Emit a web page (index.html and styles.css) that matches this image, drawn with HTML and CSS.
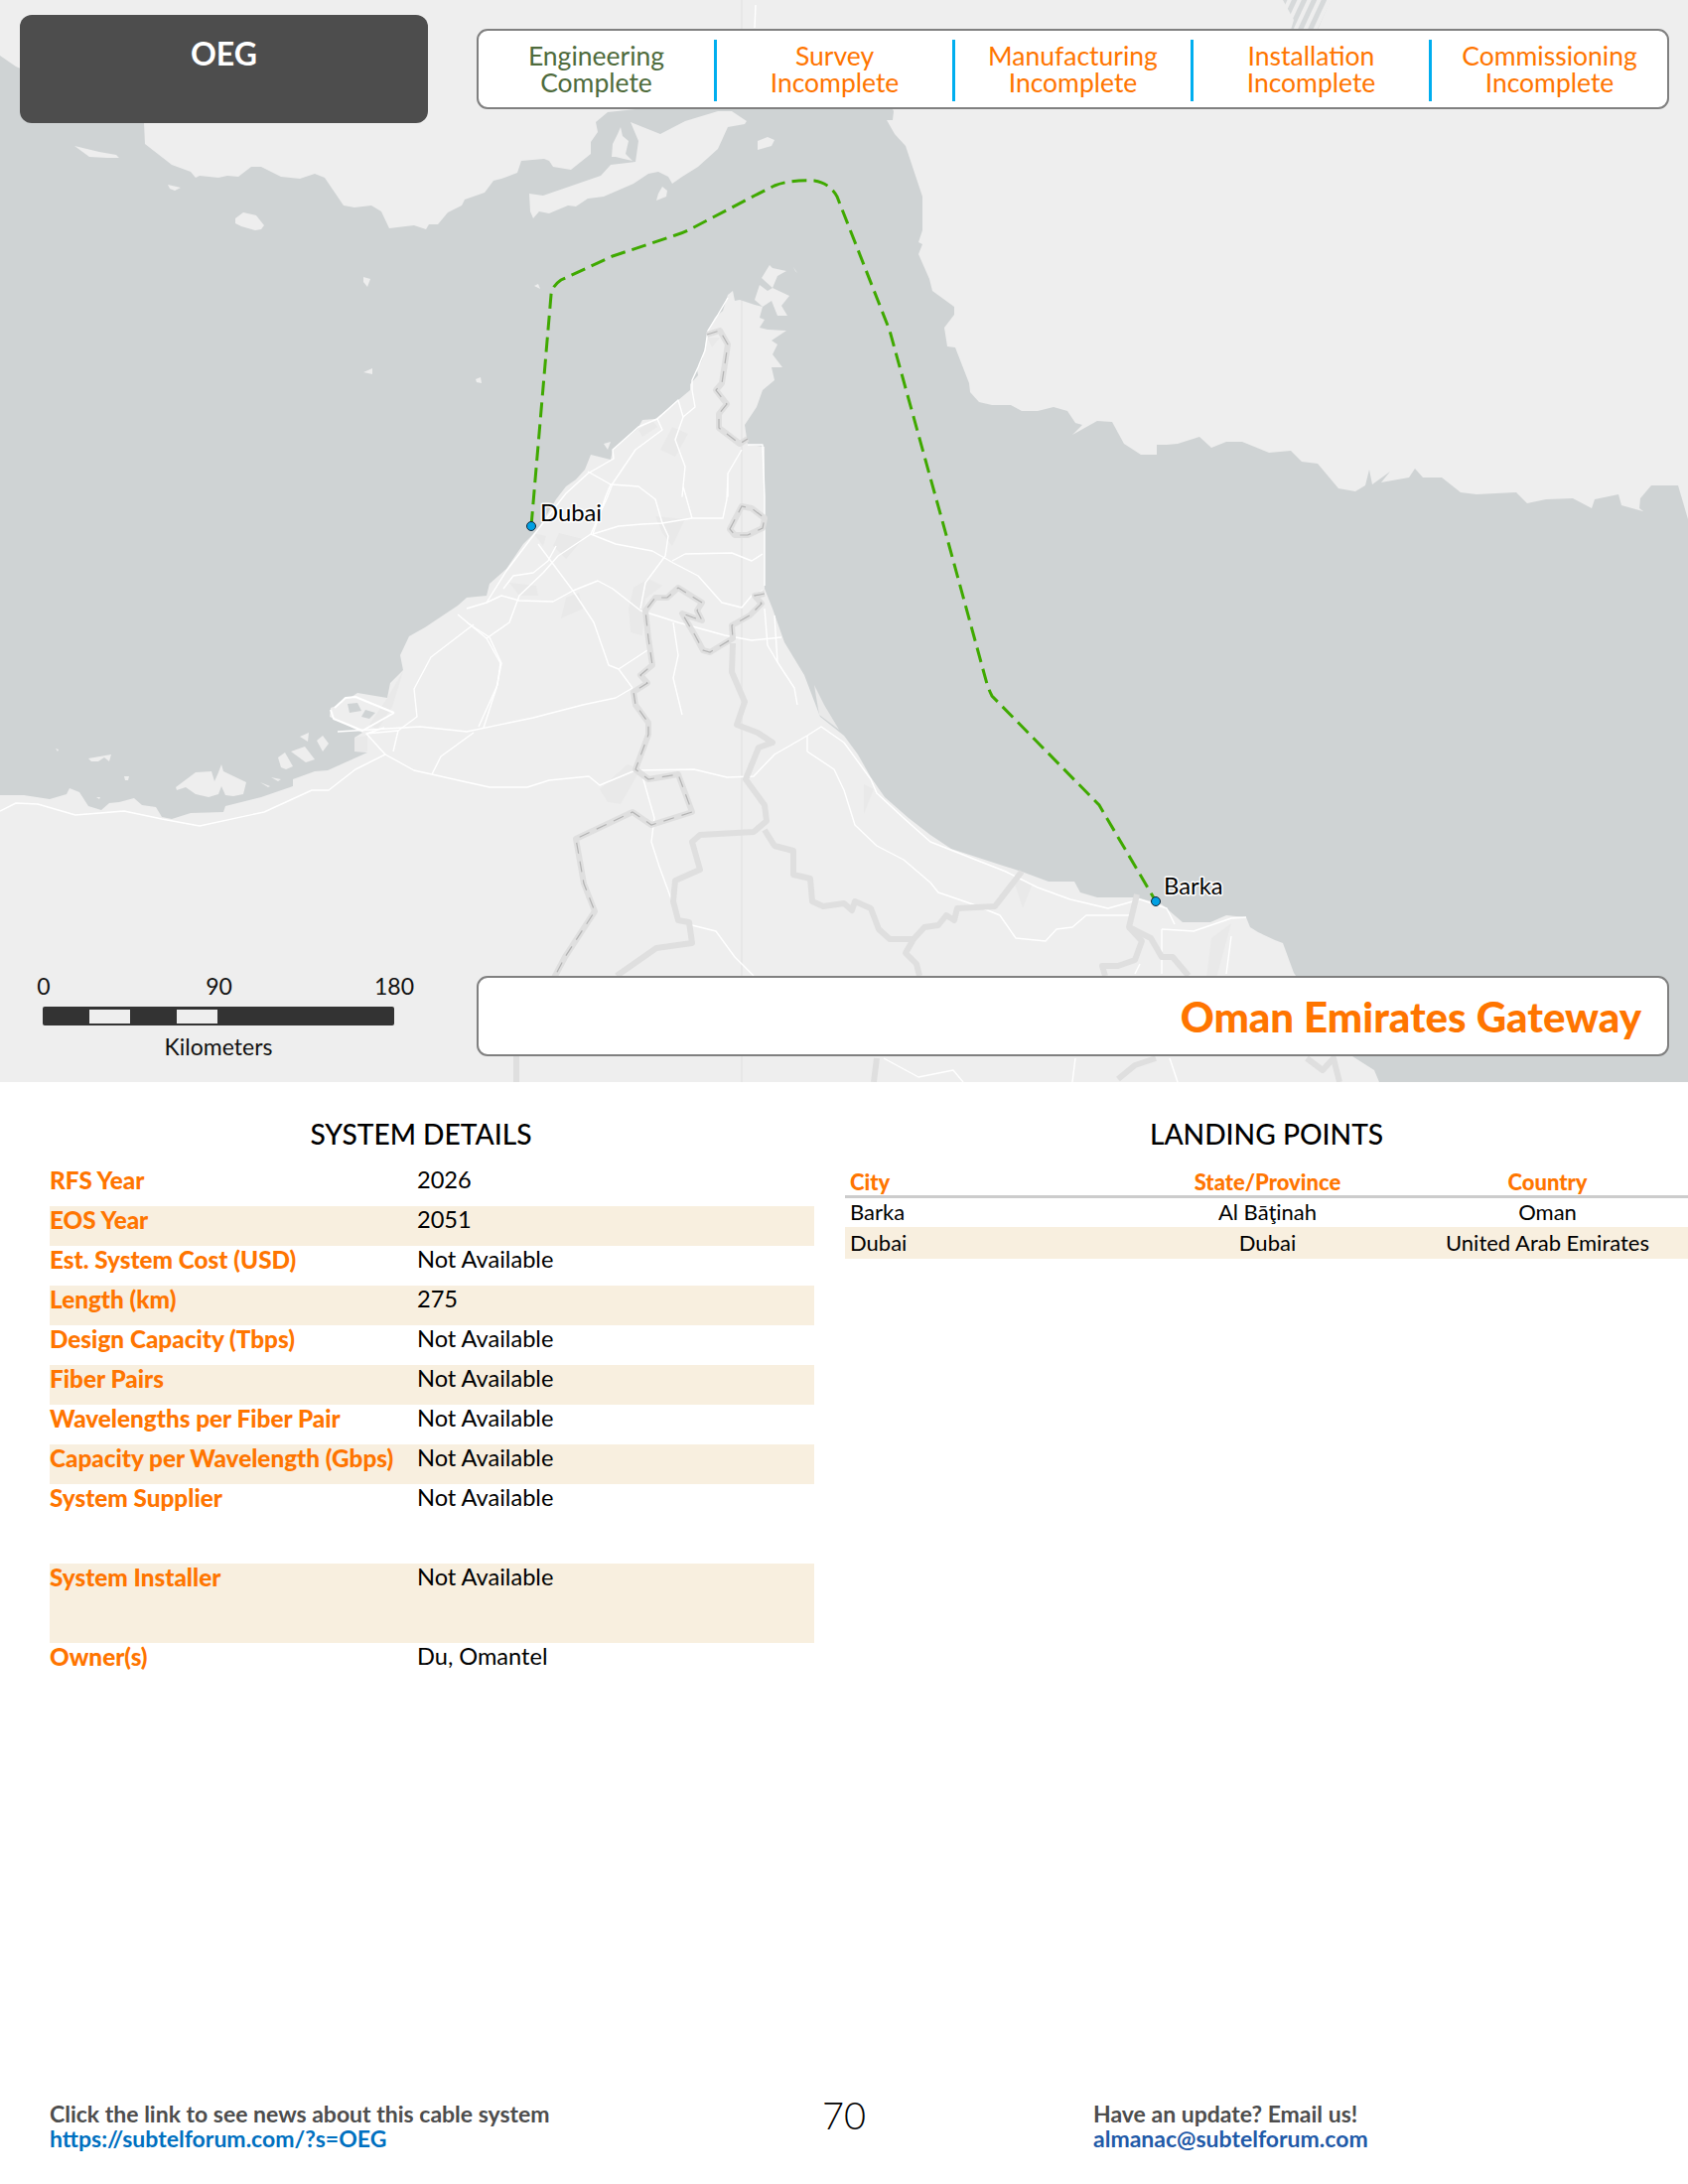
FILE: index.html
```html
<!DOCTYPE html>
<html lang="en">
<head>
<meta charset="utf-8">
<title>OEG - Oman Emirates Gateway</title>
<link rel="stylesheet" href="styles.css">
</head>
<body>
<div class="page">
  <section class="map">
    <svg class="map-art" viewBox="0 0 1700 1090" width="1700" height="1090" aria-hidden="true">
      <defs>
        <pattern id="hatch" width="9" height="9" patternUnits="userSpaceOnUse" patternTransform="rotate(25)">
          <rect width="9" height="9" fill="#eeeeee"/>
          <rect width="5" height="9" fill="#d6d9da"/>
        </pattern>
      </defs>
      <rect class="land" width="1700" height="1090"/>
      <path class="meridian" d="M747 0V1090"/>
      <polygon fill="url(#hatch)" points="1292,0 1340,0 1327,30 1300,30 1303,20"/>
      <polygon class="water" points="0,56 16,67 145,124 146,145 173,166 192,173 197,179 201,177 220,179 229,177 240,178 253,168 263,168 283,178 302,180 317,175 327,179 346,207 357,209 374,207 384,213 392,230 417,227 429,231 432,226 441,226 451,214 465,207 468,201 488,194 497,182 505,180 521,174 525,162 548,160 553,162 557,168 575,171 595,155 595,143 602,133 600,123 612,113 640,110 899,110 900,112 899,121 893,121 901,135 912,147 918,165 929,198 929,232 925,244 929,246 925,256 936,281 939,293 961,309 961,317 951,330 954,349 962,350 976,386 977,395 986,405 999,408 1018,408 1029,414 1045,414 1061,410 1075,414 1083,426 1090,428 1080,438 1105,424 1120,425 1132,447 1149,458 1165,458 1165,448 1175,448 1186,447 1208,440 1220,451 1235,445 1251,445 1278,456 1300,454 1311,465 1327,467 1348,492 1365,495 1375,489 1379,473 1382,488 1400,475 1391,486 1419,481 1425,472 1433,481 1452,481 1471,496 1487,498 1527,496 1538,507 1557,503 1584,502 1603,512 1606,503 1630,498 1633,509 1658,516 1663,521 1651,512 1652,502 1663,489 1690,489 1700,523 1700,1090 1389,1090 1384,1078 1362,1064 1303,980 1292,950 1284,947 1267,939 1259,934 1255,924 1235,922 1219,929 1191,929 1170,911 1145,904 1105,904 1088,899 1082,888 1056,888 1029,878 1007,871 958,855 937,841 915,824 891,803 877,783 864,760 850,741 826,722 810,680 790,647 778,613 770,593 770,450 753,448 750,428 762,410 768,393 780,383 777,370 788,370 778,357 783,347 777,343 792,333 773,332 765,330 770,322 765,320 768,309 760,307 745,302 740,303 738,293 733,297 728,313 720,320 713,333 710,350 707,363 702,372 703,378 695,387 695,393 683,403 675,410 660,422 647,423 642,432 617,453 615,463 595,458 589,473 580,483 570,490 560,503 542,533 527,548 510,573 493,588 490,600 470,602 461,610 428,632 412,641 403,660 406,675 393,688 390,703 360,698 342,710 333,713 332,722 365,738 357,743 357,757 370,758 330,776 317,777 295,785 295,792 263,803 227,812 225,818 192,819 173,825 163,823 157,813 143,811 135,804 120,808 110,809 102,816 89,812 80,798 70,794 67,800 50,805 24,801 0,801"/>
      <g class="land-bits">
        <polygon points="533,195 547,197 605,177 615,166 632,164 640,163 643,142 635,123 665,135 690,122 723,112 737,112 752,122 750,125 733,128 723,150 703,168 687,178 677,185 673,178 663,173 653,175 638,185 608,198 592,200 580,208 572,207 553,215 543,213 537,220 534,213"/>
        <polygon points="625,128 627,137 633,142 630,155 637,162 628,160 620,158 616,158 617,145 622,135"/>
        <polygon points="763,142 773,138 780,141 777,147 763,151"/>
        <polygon points="667,188 672,192 671,198 661,202 663,195"/>
        <polygon points="237,220 245,214 258,217 266,227 263,231 257,232 243,228 237,225"/>
        <polygon points="75,147 100,153 117,156 120,159 108,159 90,158"/>
        <polygon points="169,186 182,189 176,192 171,190"/>
        <polygon points="366,279 373,281 370,289 366,284"/>
        <polygon points="366,375 375,371 375,377"/>
        <polygon points="479,382 484,380 485,386 480,385"/>
        <polygon points="538,288 542,286 544,291"/>
        <polygon points="608,447 615,445 612,453"/>
        <polygon points="760,302 765,287 773,293 778,290 767,280 775,267 778,270 792,273 783,278 778,290 795,298 787,308 793,318 783,318 777,303 768,309"/>
        <polygon points="799,269 803,275 801,273"/>
        <polygon points="177,793 197,778 213,777 216,787 220,778 223,770 225,777 248,788 245,800 235,802 227,801 223,792 220,800 210,803 197,800 187,793 178,796"/>
        <polygon points="280,763 287,758 295,772 288,775 283,773"/>
        <polygon points="293,757 307,752 317,765 308,768"/>
        <polygon points="319,746 325,741 331,749 325,757"/>
        <polygon points="302,742 311,738 310,747"/>
        <polygon points="262,788 272,792 270,793"/>
        <polygon points="273,783 283,785 280,787"/>
        <polygon points="89,764 112,760 110,767 105,763 99,767 92,767"/>
        <polygon points="125,782 130,782 129,786 126,786"/>
        <polygon points="56,754 59,755 58,757"/>
        <polygon points="97,803 101,803 100,805"/>
        <polygon points="337,713 348,703 358,702 397,718 387,727 370,733 360,728 340,723"/>
      </g>
      <polygon class="water" points="350,709 360,708 364,716 352,718"/>
      <polygon class="water" points="368,715 378,718 372,724 364,722"/>
      <g class="urban">
        <polygon points="633,613 638,592 653,583 667,590 650,603 647,640 635,637"/>
        <polygon points="565,623 570,602 583,597 587,613"/>
        <polygon points="660,520 690,523 677,550 667,537"/>
        <polygon points="513,587 540,590 542,600 523,600"/>
        <polygon points="537,537 550,540 547,550"/>
        <polygon points="563,537 587,543 570,563 557,550"/>
        <polygon points="665,453 677,430 693,437 680,460"/>
        <polygon points="643,433 657,423 662,430 647,440"/>
        <polygon points="712,340 725,340 717,350"/>
        <polygon points="357,743 370,741 370,757 357,757"/>
        <polygon points="390,703 406,676 395,712 380,735 372,730"/>
        <polygon points="604,795 632,770 645,775 625,810 612,808"/>
        <polygon points="820,690 830,710 845,735 825,720"/>
        <polygon points="870,790 880,795 870,820"/>
        <polygon points="1020,885 1040,890 1030,915"/>
        <polygon points="1220,945 1240,930 1225,985 1215,985"/>
      </g>
      <g class="roads">
        <polyline points="761,5 760,28"/>
        <polyline points="733,300 723,317 713,333 710,353 703,370 697,383 697,393 700,410 688,420 683,403 662,422 643,430 617,453 618,462 592,477 570,497 542,533 510,575 490,607"/>
        <polyline points="662,422 667,433 640,453 617,487 612,500 595,538"/>
        <polyline points="688,420 680,443 690,470 687,500 688,490 697,522"/>
        <polyline points="592,475 615,488 643,490 660,503 667,527 673,540 670,560 650,587 645,613"/>
        <polyline points="615,488 610,500 597,538"/>
        <polyline points="753,448 768,448 770,500 770,590"/>
        <polyline points="747,453 733,477 733,500 733,480 732,503 728,522 697,522 667,527 647,528 623,530 597,538"/>
        <polyline points="470,613 490,607 505,600 523,605 557,606 577,595 602,585 617,593 645,615 683,627 730,640 757,645 787,642"/>
        <polyline points="542,548 577,595 598,627 613,670 623,674 637,693"/>
        <polyline points="490,643 513,627 523,600 547,577 562,560 595,538 620,548 657,555 678,567 703,580 727,607 747,612 757,600 768,595"/>
        <polyline points="470,627 493,642 505,668 500,693 487,733"/>
        <polyline points="677,565 690,558 737,557 757,565 768,558"/>
        <polyline points="678,627 683,660 678,683 687,720"/>
        <polyline points="623,674 652,655"/>
        <polyline points="340,737 423,732 470,737 537,723 587,710 620,703 637,693"/>
        <polyline points="770,613 773,650 783,667 800,693 803,710"/>
        <polyline points="507,593 517,580 537,577 552,565 560,550"/>
        <polyline points="0,817 16,809 38,810 76,821 125,817 163,825 201,832 266,818 314,796 331,796 358,775 388,760 369,739"/>
        <polyline points="388,760 417,776 466,787 493,793 531,793 553,786 593,782 604,791 640,776 699,775 732,783 759,782 780,760 813,741 827,732 850,748 877,785 883,799 910,824 937,848 1013,878 1045,894 1078,906 1116,915 1148,906 1175,915 1183,931"/>
        <polyline points="387,733 369,739 401,736 396,757"/>
        <polyline points="401,736 420,722 417,694 434,662 477,629"/>
        <polyline points="461,619 490,643 504,668 501,690 482,732"/>
        <polyline points="477,738 444,762 435,780"/>
        <polyline points="645,775 659,824 656,848 664,873 678,911"/>
        <polyline points="697,932 721,938 740,964 759,983"/>
        <polyline points="780,620 783,667"/>
        <polyline points="813,741 813,757 840,775 850,796 861,831 883,852 910,866 937,889 945,899 980,911 1007,922 1023,945 1053,948 1064,936 1080,934 1094,922 1137,922"/>
        <polyline points="1170,936 1170,981"/>
        <polyline points="1170,936 1202,938 1240,925 1255,924"/>
        <polyline points="1240,943 1235,981"/>
        <polyline points="1148,971 1143,981"/>
        <polyline points="1083,1066 1080,1090"/>
        <polyline points="1178,1066 1186,1090"/>
        <polyline points="890,1066 925,1085 960,1078 970,1090"/>
        <polyline class="road-heavy" points="337,713 348,703 358,702 397,718"/>
        <polyline class="road-heavy" points="333,715 336,724 365,736 397,718"/>
      </g>
      <g class="borders">
        <polyline points="770,598 760,600 767,608 755,620 737,630 738,643 715,657 708,655 700,640 687,618 698,622 707,625 702,615 707,607 683,592 672,602 660,602 650,615 653,643 657,670 645,680 652,688 638,697 640,710 653,728 653,740 640,775 653,785 683,780 697,818 656,831 637,818 580,845 588,890 599,918 569,964 558,985"/>
        <polyline points="520,1064 520,1090"/>
        <polyline points="738,648 737,677 750,707 742,730 763,738 778,748 764,753 751,785 770,811 772,827 759,838 705,841 697,848 705,876 680,887 678,908 683,927 694,929 697,950 661,955 621,983"/>
        <polyline points="770,836 780,852 799,857 799,881 816,885 818,908 829,913 850,910 858,917 861,908 877,915 885,936 896,946 920,946 912,960 923,971 926,983"/>
        <polyline points="920,946 931,934 945,932 953,922 961,927 964,915 1002,913 1029,878"/>
        <polyline points="1145,901 1137,934 1159,945 1170,964 1181,964 1197,983"/>
        <polyline points="1137,934 1150,948 1143,967 1126,973 1110,973 1113,983"/>
        <polyline points="883,1066 880,1090"/>
        <polyline points="1126,1087 1143,1073 1164,1066"/>
        <polyline points="1316,1066 1332,1078 1343,1066 1349,1090"/>
        <polyline points="712,337 725,333 733,347 727,386 721,393 732,407 724,417 724,431 745,447 753,442"/>
        <polygon points="735,533 747,510 757,512 770,522 768,532 753,539 740,539"/>
      </g>
      <g class="border-dash">
        <polyline points="770,598 760,600 767,608 755,620 737,630 738,643 715,657 708,655 700,640 687,618 698,622 707,625 702,615 707,607 683,592 672,602 660,602 650,615 653,643 657,670 645,680 652,688 638,697 640,710 653,728 653,740 640,775 653,785 683,780 697,818 656,831 637,818 580,845 588,890 599,918 569,964 558,985"/>
        <polyline points="712,337 725,333 733,347 727,386 721,393 732,407 724,417 724,431 745,447 753,442"/>
        <polygon points="735,533 747,510 757,512 770,522 768,532 753,539 740,539"/>
      </g>
      <path class="route" d="M535,530 L555,297 Q556,288 565,282 L617,258 L680,237 Q687,235 693,232 L760,197 L780,187 Q795,181 820,182 Q835,184 843,198 L896,333 L956,550 L994,689 Q996,695 999,701 L1107,811 L1164,908"/>
      <circle class="landing" cx="535" cy="530" r="4.5"/>
      <circle class="landing" cx="1164" cy="908" r="4.5"/>
      <text class="place" x="544" y="525">Dubai</text>
      <text class="place" x="1172" y="901">Barka</text>
    </svg>

    <div class="code-card">OEG</div>

    <ul class="status-card">
      <li class="status status-done">Engineering<br>Complete</li>
      <li class="status">Survey<br>Incomplete</li>
      <li class="status">Manufacturing<br>Incomplete</li>
      <li class="status">Installation<br>Incomplete</li>
      <li class="status">Commissioning<br>Incomplete</li>
    </ul>

    <div class="scale">
      <div class="scale-labels"><span>0</span><span>90</span><span>180</span></div>
      <div class="scale-bar">
        <span class="scale-gap scale-gap-a"></span>
        <span class="scale-gap scale-gap-b"></span>
      </div>
      <div class="scale-unit">Kilometers</div>
    </div>

    <div class="name-card">Oman Emirates Gateway</div>
  </section>

  <section class="details">
    <div class="system">
      <h2 class="heading heading-system">SYSTEM DETAILS</h2>
      <dl class="facts">
        <div class="fact"><dt>RFS Year</dt><dd>2026</dd></div>
        <div class="fact alt"><dt>EOS Year</dt><dd>2051</dd></div>
        <div class="fact"><dt>Est. System Cost (USD)</dt><dd>Not Available</dd></div>
        <div class="fact alt"><dt>Length (km)</dt><dd>275</dd></div>
        <div class="fact"><dt>Design Capacity (Tbps)</dt><dd>Not Available</dd></div>
        <div class="fact alt"><dt>Fiber Pairs</dt><dd>Not Available</dd></div>
        <div class="fact"><dt>Wavelengths per Fiber Pair</dt><dd>Not Available</dd></div>
        <div class="fact alt"><dt>Capacity per Wavelength (Gbps)</dt><dd>Not Available</dd></div>
        <div class="fact tall"><dt>System Supplier</dt><dd>Not Available</dd></div>
        <div class="fact alt tall"><dt>System Installer</dt><dd>Not Available</dd></div>
        <div class="fact"><dt>Owner(s)</dt><dd>Du, Omantel</dd></div>
      </dl>
    </div>
    <div class="landing-points">
      <h2 class="heading">LANDING POINTS</h2>
      <table class="points">
        <thead>
          <tr><th class="city">City</th><th>State/Province</th><th>Country</th></tr>
        </thead>
        <tbody>
          <tr><td class="city">Barka</td><td>Al Bāţinah</td><td>Oman</td></tr>
          <tr class="alt"><td class="city">Dubai</td><td>Dubai</td><td>United Arab Emirates</td></tr>
        </tbody>
      </table>
    </div>
  </section>

  <footer class="footer">
    <div class="foot-note">
      <p>Click the link to see news about this cable system</p>
      <a class="foot-link" href="#">https://subtelforum.com/?s=OEG</a>
    </div>
    <div class="page-number">70</div>
    <div class="foot-note foot-right">
      <p>Have an update? Email us!</p>
      <a class="foot-mail" href="#">almanac@subtelforum.com</a>
    </div>
  </footer>
</div>
</body>
</html>
```

FILE: styles.css
```css
* { box-sizing: border-box; }
html, body { margin: 0; padding: 0; background: #fff; }
body { font-family: "Lato", "Liberation Sans", sans-serif; color: #000; }
.page { width: 1700px; height: 2200px; display: flex; flex-direction: column; }

/* map */
.map { position: relative; height: 1090px; overflow: hidden; flex: none; }
.map-art { display: block; }
.land { fill: #eeeeee; }
.water { fill: #cfd3d4; }
.land-bits polygon { fill: #eeeeee; }
.meridian { stroke: #e0e0e0; stroke-width: 1; fill: none; }
.urban polygon { fill: #e9e9e9; }
.roads polyline { fill: none; stroke: #fff; stroke-width: 1.4; stroke-linejoin: round; }
.roads .road-heavy { stroke-width: 2; }
.borders polyline, .borders polygon { fill: none; stroke: #dfdfdf; stroke-width: 6; stroke-linejoin: round; }
.border-dash polyline, .border-dash polygon { fill: none; stroke: #b3b3b3; stroke-width: 1.2; stroke-dasharray: 11 8; }
.route { fill: none; stroke: #3fa900; stroke-width: 3; stroke-dasharray: 15 7; }
.landing { fill: #00a0e3; stroke: #123; stroke-width: 1; }
.place { font-size: 23.8px; fill: #000; stroke: #fff; stroke-width: 3px; paint-order: stroke; stroke-linejoin: round; }

.code-card {
  position: absolute; left: 20px; top: 15px; width: 411px; height: 109px;
  background: #4d4d4d; border-radius: 12px; color: #fff;
  font-size: 32px; font-weight: 700; text-align: center; padding-top: 21px; line-height: 36px;
}
.status-card {
  position: absolute; left: 480px; top: 29px; width: 1201px; height: 81px;
  margin: 0; padding: 9px 0; list-style: none; display: flex; background: #fff;
  border: 2px solid #808080; border-radius: 11px;
}
.status {
  flex: 1 1 0; height: 62px; text-align: center; color: #ff7500;
  font-size: 26.5px; line-height: 27px; padding-top: 2.5px; border-left: 3px solid #00aeef;
}
.status:first-child { border-left: 0; }
.status-done { color: #4e6b3c; }

.scale { position: absolute; left: 14px; top: 980px; width: 413px; font-size: 23px; color: #111; }
.scale-labels { display: flex; justify-content: space-between; line-height: 26px; }
.scale-labels span { width: 60px; text-align: center; }
.scale-bar { position: relative; margin: 8px 0 0 29px; width: 354px; height: 19px; background: #333; border-radius: 2px; }
.scale-gap { position: absolute; top: 3px; height: 14px; width: 41px; background: #eee; }
.scale-gap-a { left: 47px; }
.scale-gap-b { left: 135px; }
.scale-unit { margin: 8px 0 0 29px; width: 354px; text-align: center; line-height: 26px; }

.name-card {
  position: absolute; left: 480px; top: 983px; width: 1201px; height: 81px;
  background: #fff; border: 2px solid #808080; border-radius: 11px;
  color: #ff7500; font-size: 42px; font-weight: 900; text-align: right;
  padding-right: 26px; line-height: 78px;
}

/* details */
.details { display: flex; padding: 35px 0 0 50px; flex: none; }
.system { width: 770px; flex: none; }
.landing-points { margin-left: 31px; width: 849px; flex: none; }
.heading { margin: 0; font-size: 28.2px; font-weight: 500; line-height: 34px; text-align: center; }
.heading-system { padding-right: 22px; }
.facts { margin: 16px 0 0; }
.fact { display: flex; height: 40px; font-size: 23.6px; line-height: 27px; }
.fact.tall { height: 80px; }
.fact.alt { background: #f8efdf; }
.fact dt { width: 370px; flex: none; color: #ff7500; font-weight: 900; font-size: 24.3px; }
.fact dd { margin: 0; }
.points { margin-top: 14px; width: 849px; border-collapse: collapse; table-layout: fixed; font-size: 22px; }
.points th { color: #ff7500; font-weight: 900; padding: 5px 0 0; height: 32px; line-height: 26px; border-bottom: 3px solid #ccc; text-align: center; }
.points td { padding: 0; height: 30px; line-height: 28px; text-align: center; }
.points .alt td { height: 32px; }
.points .city { width: 285px; text-align: left; padding-left: 5px; }
.points th:nth-child(2) { width: 281px; }
.points .alt { background: #f8efdf; }

/* footer */
.footer { margin-top: auto; display: flex; padding-left: 50px; height: 83px; flex: none; }
.foot-note { font-size: 23px; line-height: 25px; font-weight: 700; color: #4d4d4d; width: 750px; flex: none; }
.foot-note p { margin: 0; }
.foot-note a { text-decoration: none; }
.foot-link { color: #0070c0; }
.foot-mail { color: #1f5aa8; }
.page-number { width: 100px; text-align: center; font-size: 38px; font-weight: 300; line-height: 26px; }
.foot-right { margin-left: 201px; width: 500px; }
```
